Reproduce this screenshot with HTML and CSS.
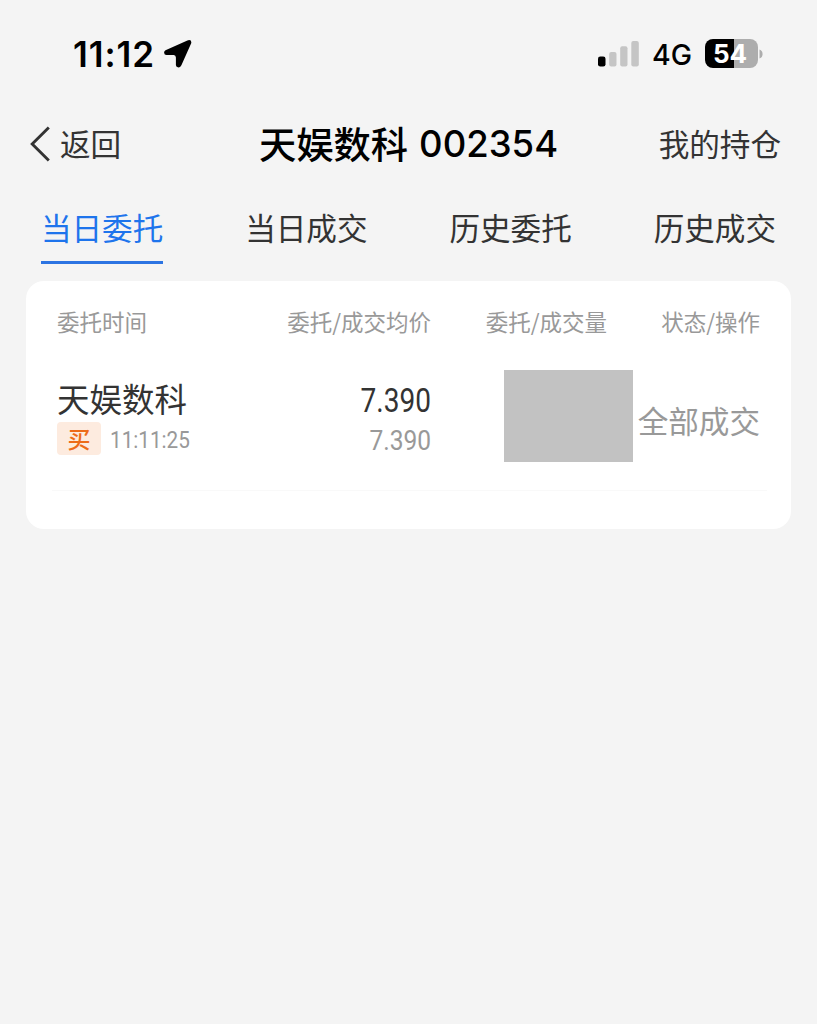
FILE: index.html
```html
<!DOCTYPE html>
<html lang="zh-CN">
<head>
<meta charset="utf-8">
<title>天娱数科 002354</title>
<link rel="stylesheet" href="styles.css">
</head>
<body>
<div class="status">
  <span class="clock">11:12</span>
  <svg class="location" width="28" height="28" viewBox="0 0 28 28"><path d="M1.500 10.200L23.400 .4Q28 -.8 27.200 3.200L17.400 25.200Q16 27.800 13.800 27.300Q11.900 27 11.900 25V17.500Q11.800 15.200 9.800 15.100H2.400Q.3 14.900 .1 12.700Q0 10.900 1.500 10.200Z"/></svg>
  <svg class="signal" width="42" height="28" viewBox="0 0 42 28"><rect x="0" y="16.500" width="7.500" height="10" rx="2.300" fill="#000"/><g fill="#c5c5c5"><rect x="11.200" y="12" width="7.300" height="14.500" rx="2"/><rect x="22.200" y="6.200" width="7.300" height="20.300" rx="2"/><rect x="33.300" y="1" width="7.500" height="25.500" rx="2"/></g></svg>
  <span class="network">4G</span>
  <div class="battery"><span class="level">54</span></div>
  <svg class="nub" width="4" height="10" viewBox="0 0 4 10"><path d="M.5 .5Q3.600 1.500 3.600 5T.5 9.500Z" fill="#adadad"/></svg>
</div>
<header class="nav">
  <a class="back"><svg width="22" height="36" viewBox="0 0 22 36"><path d="M19.800 1.500L3.200 18L19.800 34.500" fill="none" stroke="#333" stroke-width="2.900"/></svg><span class="caption">返回</span></a>
  <h1 class="title"><span class="caption">天娱数科</span><span class="code">002354</span></h1>
  <a class="holdings caption">我的持仓</a>
</header>
<nav class="tabs">
  <a class="tab active">当日委托</a><a class="tab">当日成交</a><a class="tab">历史委托</a><a class="tab">历史成交</a>
</nav>
<main class="card">
  <div class="columns labels"><span>委托时间</span><span>委托/成交均价</span><span>委托/成交量</span><span>状态/操作</span></div>
  <div class="columns order">
    <div class="stock">
      <div class="name">天娱数科</div>
      <div class="meta"><span class="buy">买</span><span class="time">11:11:25</span></div>
    </div>
    <div class="prices"><div class="price">7.390</div><div class="average">7.390</div></div>
    <div class="volume"></div>
    <div class="state">全部成交</div>
  </div>
</main>
</body>
</html>
```
FILE: styles.css
```css
* { box-sizing: border-box; }
body {
  margin: 0;
  min-height: 1024px;
  background: #f4f4f4;
  color: #333;
  font-family: "Noto Sans CJK SC", sans-serif;
}
.status {
  height: 108px;
  padding-left: 73px;
  display: flex;
  align-items: center;
  color: #000;
  font-family: Inter, sans-serif;
}
.clock {
  width: 91px;
  font-size: 35px;
  font-weight: 600;
  line-height: 40px;
  letter-spacing: .9px;
}
.signal { margin-left: 406px; }
.network {
  width: 53px;
  margin-left: 12px;
  padding-top: 2px;
  font-size: 28.500px;
  font-weight: 500;
  line-height: 40px;
}
.battery {
  width: 53px;
  height: 29px;
  margin-bottom: 1px;
  padding-right: 3px;
  border-radius: 8px;
  background: linear-gradient(to right, #000 29px, #adadad 29px);
  color: #fff;
  display: flex;
  justify-content: center;
}
.level { font-size: 26px; font-weight: 700; line-height: 29px; }
.nub { margin-left: 1px; }

.nav {
  height: 72px;
  padding: 0 36px 0 29px;
  display: grid;
  grid-template-columns: 180px 1fr 180px;
  align-items: center;
  font-size: 30.600px;
  line-height: 40px;
}
.back { display: flex; align-items: center; gap: 9px; }
.caption { padding-bottom: 2px; }
.title {
  margin: 0;
  padding-left: 7px;
  display: flex;
  align-items: center;
  justify-content: center;
  gap: 11px;
  color: #000;
  font-size: 37.300px;
  font-weight: 500;
  white-space: nowrap;
}
.code { font-family: Inter, sans-serif; font-size: 36.500px; }
.holdings { text-align: right; }

.tabs { height: 101px; display: grid; grid-template-columns: repeat(4, 1fr); justify-items: center; }
.tab {
  height: 84px;
  padding-top: 27px;
  font-size: 30.600px;
  line-height: 40px;
  border-bottom: 3px solid transparent;
}
.active { color: #1e74ec; border-bottom-color: #2c74e2; }

.card {
  height: 248px;
  margin: 0 26px;
  padding: 0 24px 0 26px;
  border-radius: 18px;
  background: #fff;
}
.columns {
  display: grid;
  padding-left: 5px;
}
.labels {
  grid-template-columns: 180px 194px 176px 153px;
  padding-top: 24px;
  height: 89px;
  font-size: 22.500px;
  line-height: 32px;
  color: #999;
}
.labels span + span { text-align: right; }
.order {
  height: 121px;
  grid-template-columns: 200px 174px 202px 127px;
  border-bottom: 1px solid #f9f9f9;
}
.name { padding-top: 5px; font-size: 32.500px; line-height: 46px; }
.meta { padding-top: 1px; display: flex; align-items: flex-start; gap: 9px; }
.buy {
  width: 44px;
  height: 33px;
  border-radius: 4px;
  background: #fdebdf;
  color: #ed6b19;
  font-size: 23px;
  font-weight: 500;
  line-height: 32px;
  text-align: center;
}
.time, .price, .average { font-family: Roboto, sans-serif; }
.time { padding-top: 2px; color: #999; font-size: 23px; line-height: 33px; transform: scaleX(.9); transform-origin: left; }
.prices { text-align: right; }
.price { padding-top: 11px; font-size: 33px; line-height: 40px; transform: scaleX(.85); transform-origin: right; }
.average { color: #999; font-size: 28.500px; line-height: 40px; transform: scaleX(.86); transform-origin: right; }
.volume { width: 129px; height: 92px; margin: 0 0 0 73px; background: #c2c2c2; }
.state { padding-top: 30px; color: #999; font-size: 30.600px; line-height: 40px; text-align: right; white-space: nowrap; }
```
